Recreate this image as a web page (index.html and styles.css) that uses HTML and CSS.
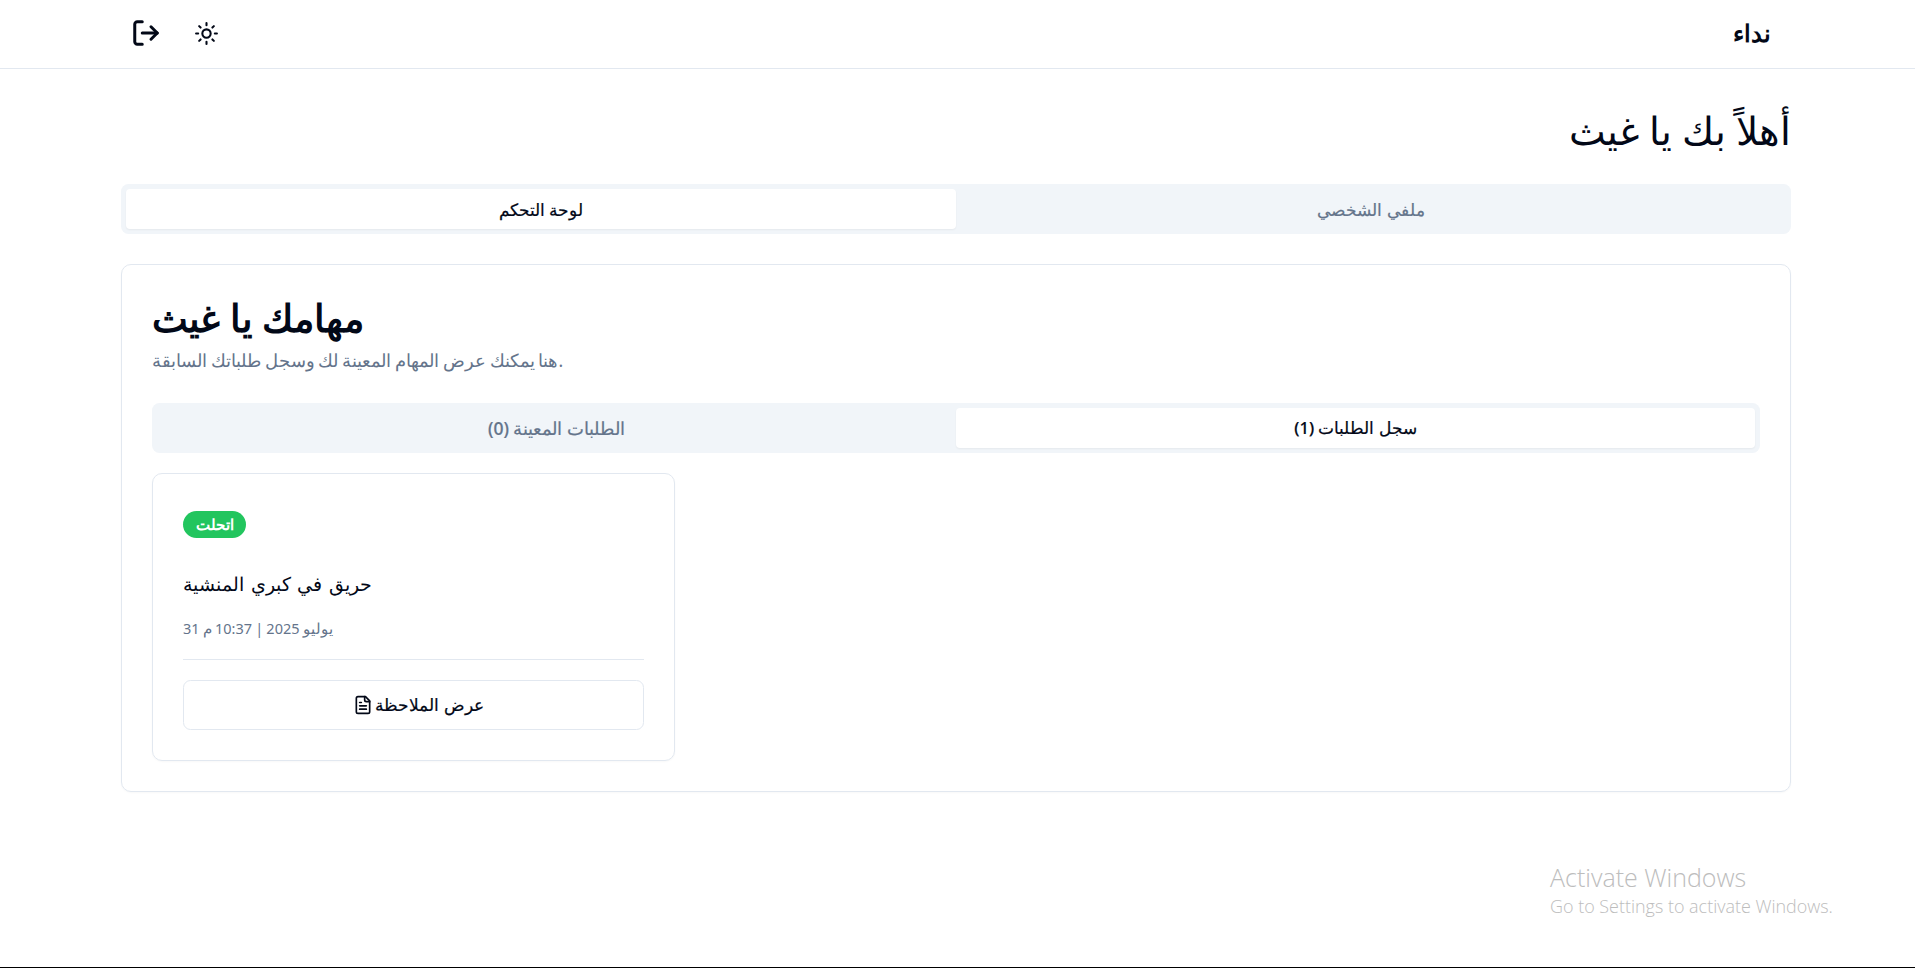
FILE: index.html
```html
<!DOCTYPE html>
<html lang="ar">
<head>
<meta charset="utf-8">
<title>نداء</title>
<link rel="stylesheet" href="styles.css">
</head>
<body>
<div class="page">
  <header class="topbar">
    <div class="topbar-inner">
      <div class="actions">
        <button class="icon-btn" aria-label="logout">
          <svg class="icon-logout" viewBox="0 0 24 24"><path d="M9 21H5a2 2 0 0 1-2-2V5a2 2 0 0 1 2-2h4"/><polyline points="16 17 21 12 16 7"/><line x1="21" y1="12" x2="9" y2="12"/></svg>
        </button>
        <button class="icon-btn" aria-label="theme">
          <svg class="icon-sun" viewBox="0 0 24 24"><circle cx="12" cy="12" r="4"/><path d="M12 2v2"/><path d="M12 20v2"/><path d="m4.93 4.93 1.41 1.41"/><path d="m17.66 17.66 1.41 1.41"/><path d="M2 12h2"/><path d="M20 12h2"/><path d="m6.34 17.66-1.41 1.41"/><path d="m19.07 4.93-1.41 1.41"/></svg>
        </button>
      </div>
      <div class="brand">نداء</div>
    </div>
  </header>
  <main class="main">
    <h1 class="welcome">أهلاً بك يا غيث</h1>
    <div class="tabs">
      <div class="tab tab-active">لوحة التحكم</div>
      <div class="tab">ملفي الشخصي</div>
    </div>
    <section class="panel">
      <h2 class="panel-title">مهامك يا غيث</h2>
      <p class="panel-desc">هنا يمكنك عرض المهام المعينة لك وسجل طلباتك السابقة.</p>
      <div class="tabs tabs-inner">
        <div class="tab tab-wide"><span dir="rtl">الطلبات المعينة (0)</span></div>
        <div class="tab tab-active"><span dir="rtl">سجل الطلبات (1)</span></div>
      </div>
      <div class="cards">
        <article class="card">
          <span class="badge">اتحلت</span>
          <h3 class="card-title">حريق في كبري المنشية</h3>
          <p class="card-date">31 يوليو 2025 | 10:37 م</p>
          <div class="card-foot">
            <button class="note-btn">
              <svg class="icon-file" viewBox="0 0 24 24"><path d="M15 2H6a2 2 0 0 0-2 2v16a2 2 0 0 0 2 2h12a2 2 0 0 0 2-2V7Z"/><path d="M14 2v4a2 2 0 0 0 2 2h4"/><path d="M10 9H8"/><path d="M16 13H8"/><path d="M16 17H8"/></svg>
              <span>عرض الملاحظة</span>
            </button>
          </div>
        </article>
      </div>
    </section>
  </main>
  <div class="watermark">
    <div class="wm-title">Activate Windows</div>
    <div class="wm-sub">Go to Settings to activate Windows.</div>
  </div>
</div>
</body>
</html>
```

FILE: styles.css
```css
* { box-sizing: border-box; }
html, body { margin: 0; padding: 0; }
body {
  background: #fff;
  color: #020817;
  font-family: "Noto Sans", sans-serif;
}
.page {
  position: relative;
  height: 968px;
  padding-right: 3px;
  overflow: hidden;
  border-bottom: 1px solid #000;
}
svg {
  fill: none;
  stroke: currentColor;
  stroke-linecap: round;
  stroke-linejoin: round;
  display: block;
}
.topbar {
  height: 69px;
  margin-right: -3px;
  padding-right: 3px;
  border-bottom: 1px solid #e2e8f0;
}
.topbar-inner {
  width: 1670px;
  margin: 0 auto;
  height: 68px;
  padding: 0 20px 2px 0;
  display: flex;
  align-items: center;
  justify-content: space-between;
}
.actions { display: flex; gap: 10px; }
.icon-btn {
  width: 50px;
  height: 50px;
  padding: 0;
  border: 0;
  background: none;
  color: #020817;
  display: flex;
  align-items: center;
  justify-content: center;
}
.icon-logout { width: 30px; height: 30px; stroke-width: 2.4; }
.icon-sun { width: 25px; height: 25px; stroke-width: 2; }
.brand {
  font-size: 24px;
  font-weight: 600;
  line-height: 35px;
  margin-bottom: 2px;
}
.main {
  width: 1670px;
  margin: 0 auto;
  padding-top: 38px;
}
.welcome {
  margin: 0 0 31px;
  font-size: 38.8px;
  line-height: 46px;
  font-weight: 400;
  text-align: right;
}
.tabs {
  display: grid;
  grid-template-columns: 1fr 1fr;
  height: 50px;
  padding: 5px;
  background: #f1f5f9;
  border-radius: 7.5px;
}
.tab {
  display: flex;
  align-items: center;
  justify-content: center;
  font-size: 16.6px;
  font-weight: 500;
  color: #64748b;
  border-radius: 4px;
  -webkit-text-stroke: 0.2px currentColor;
}
.tab-wide { font-size: 17.5px; }
.tab-active {
  background: #fff;
  color: #020817;
  box-shadow: 0 1px 2px rgba(0, 0, 0, 0.05);
}
.panel {
  margin-top: 30px;
  height: 528px;
  padding: 30px;
  border: 1px solid #e2e8f0;
  border-radius: 10px;
  box-shadow: 0 1px 2px rgba(0, 0, 0, 0.03);
}
.panel-title {
  margin: 0;
  font-size: 37.5px;
  line-height: 45px;
  font-weight: 600;
}
.panel-desc {
  margin: 7.5px 0 30px;
  font-size: 17.5px;
  line-height: 25px;
  word-spacing: -0.75px;
  color: #64748b;
}
.cards {
  margin-top: 20px;
  display: grid;
  grid-template-columns: repeat(3, 1fr);
  column-gap: 20px;
}
.card {
  height: 288px;
  padding: 37px 30px 0;
  border: 1px solid #e2e8f0;
  border-radius: 10px;
  box-shadow: 0 1px 2px rgba(0, 0, 0, 0.03);
}
.badge {
  display: inline-flex;
  align-items: center;
  justify-content: center;
  width: 63px;
  height: 27px;
  border-radius: 14px;
  background: #22c55e;
  color: #fff;
  font-size: 15px;
  font-weight: 600;
}
.card-title {
  margin: 32px 0 0;
  font-size: 19.1px;
  line-height: 28px;
  word-spacing: 1.6px;
  font-weight: 500;
}
.card-date {
  margin: 18px 0 0;
  font-size: 14.5px;
  line-height: 25px;
  word-spacing: -0.6px;
  color: #64748b;
}
.card-foot {
  margin-top: 18px;
  padding-top: 20px;
  border-top: 1px solid #e2e8f0;
}
.note-btn {
  width: 100%;
  height: 50px;
  display: flex;
  align-items: center;
  justify-content: center;
  gap: 2px;
  padding: 0;
  background: #fff;
  border: 1px solid #e2e8f0;
  border-radius: 7.5px;
  color: #020817;
  font: inherit;
  font-size: 16.8px;
  font-weight: 500;
  -webkit-text-stroke: 0.2px currentColor;
}
.icon-file { width: 20px; height: 20px; stroke-width: 2; margin-left: 10px; }
.watermark {
  position: absolute;
  left: 1550px;
  top: 861px;
  color: #bdbdbd;
  font-family: "Open Sans", sans-serif;
  font-weight: 300;
}
.wm-title { font-size: 25px; line-height: 32px; }
.wm-sub { font-size: 17.95px; line-height: 26px; }
```
